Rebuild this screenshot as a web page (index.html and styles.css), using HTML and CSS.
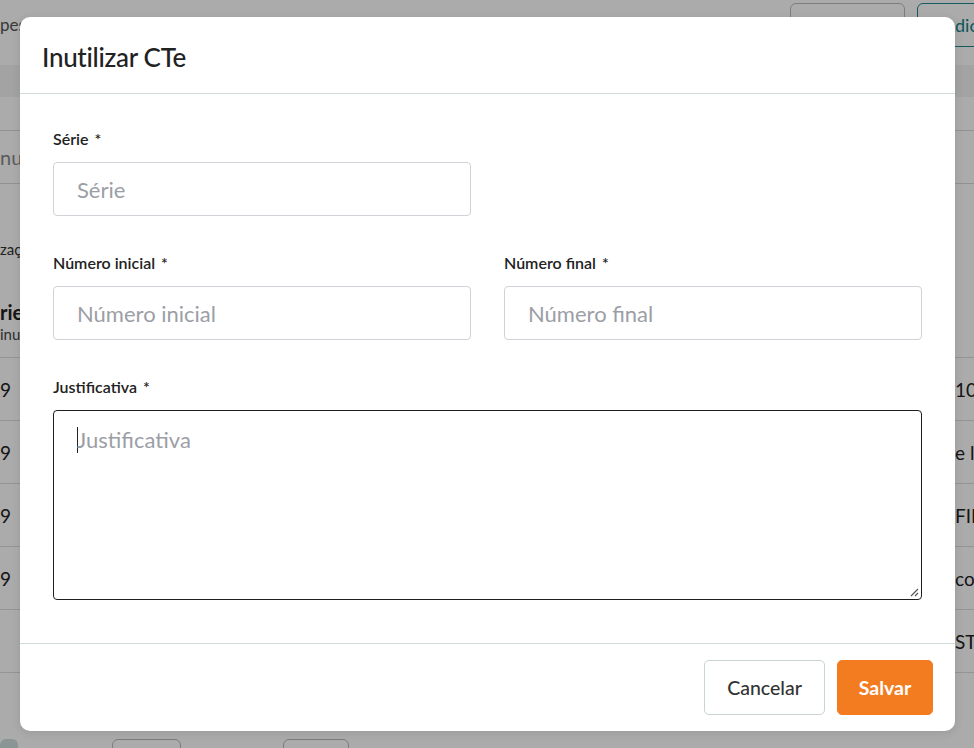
FILE: index.html
```html
<!DOCTYPE html>
<html lang="pt-BR">
<head>
<meta charset="utf-8">
<title>Inutilizar CTe</title>
<link rel="stylesheet" href="styles.css">
</head>
<body>
<div class="page">
  <header class="topbar">
    <span class="crumb">pes</span>
    <div class="top-actions">
      <button class="ghost-btn">Filtros</button>
      <button class="add-btn">Adicionar</button>
    </div>
  </header>
  <div class="tabband"></div>
  <div class="search">nu</div>
  <div class="hint">zaç</div>
  <div class="thead">
    <div class="th-main">rie</div>
    <div class="th-sub">inu</div>
  </div>
  <div class="trow"><span>9</span><span class="rcell">100</span></div>
  <div class="trow"><span>9</span><span class="rcell">e liberado</span></div>
  <div class="trow"><span>9</span><span class="rcell">FINALIZADO</span></div>
  <div class="trow"><span>9</span><span class="rcell">concluído</span></div>
  <div class="trow"><span></span><span class="rcell">STATUS</span></div>
  <div class="pager"><span class="pg pg-a"></span><span class="pg pg-b"></span><span class="pg pg-c"></span></div>
</div>

<div class="backdrop"></div>

<div class="modal" role="dialog">
  <div class="modal-head">
    <h2>Inutilizar CTe</h2>
  </div>
  <div class="modal-body">
    <div class="field half">
      <label>Série <span class="req">*</span></label>
      <input type="text" placeholder="Série">
    </div>
    <div class="row">
      <div class="field">
        <label>Número inicial <span class="req">*</span></label>
        <input type="text" placeholder="Número inicial">
      </div>
      <div class="field">
        <label>Número final <span class="req">*</span></label>
        <input type="text" placeholder="Número final">
      </div>
    </div>
    <div class="field">
      <label>Justificativa <span class="req">*</span></label>
      <div class="textarea">
        <span class="caret"></span><span class="ph">Justificativa</span>
        <svg class="grip" width="10" height="10" viewBox="0 0 10 10"><path d="M9 2 L2 9 M9 6 L6 9" stroke="#555" stroke-width="1.2" fill="none"/></svg>
      </div>
    </div>
  </div>
  <div class="modal-foot">
    <button class="btn btn-cancel">Cancelar</button>
    <button class="btn btn-save">Salvar</button>
  </div>
</div>
</body>
</html>
```

FILE: styles.css
```css
* { box-sizing: border-box; }
html, body { margin: 0; padding: 0; }
body {
  width: 974px;
  height: 748px;
  overflow: hidden;
  font-family: Lato, "Open Sans", sans-serif;
  background: #fff;
  color: #333;
  position: relative;
}

/* background page */
.page { display: flex; flex-direction: column; }
.topbar {
  height: 65px;
  display: flex;
  align-items: flex-start;
  justify-content: space-between;
  background: #fff;
}
.crumb { font-size: 17px; color: #555; margin-top: 14px; }
.top-actions { display: flex; gap: 12px; margin-top: 3px; margin-right: -58px; }
.ghost-btn, .add-btn {
  height: 44px;
  border-radius: 6px;
  background: #fff;
  font-family: Lato, sans-serif;
  font-size: 18px;
}
.ghost-btn { width: 115px; border: 1px solid #bbb; color: #fff; }
.add-btn { width: 115px; border: 1px solid #1b8a8f; color: #138489; padding-left: 25px; text-align: left; }
.tabband { height: 32px; background: #f3f3f3; }
.search {
  height: 54px;
  margin-top: 33px;
  border-top: 1px solid #d8d8d8;
  border-bottom: 1px solid #d8d8d8;
  font-size: 20px;
  color: #888;
  line-height: 52px;
}
.hint { height: 80px; padding-top: 56px; font-size: 15px; color: #333; }
.thead { height: 94px; padding-top: 36px; border-bottom: 1px solid #ddd; }
.th-main { font-size: 20px; font-weight: bold; color: #222; line-height: 24px; }
.th-sub { font-size: 15px; color: #444; line-height: 20px; }
.trow {
  height: 63px;
  display: flex;
  align-items: center;
  justify-content: space-between;
  border-bottom: 1px solid #ddd;
  font-size: 19px;
  color: #222;
}
.rcell { width: 19px; overflow: hidden; white-space: nowrap; }
.pager { display: flex; padding-top: 66px; }
.pg { height: 30px; border: 1px solid #bbb; border-radius: 6px; }
.pg-a { width: 18px; background: #cfdede; border: none; margin-left: 0; }
.pg-b { width: 69px; margin-left: 94px; }
.pg-c { width: 66px; margin-left: 102px; }

.backdrop {
  position: absolute;
  inset: 0;
  background: rgba(0, 0, 0, 0.33);
}

/* modal */
.modal {
  position: absolute;
  left: 20px;
  top: 17px;
  width: 935px;
  height: 714px;
  background: #fff;
  border-radius: 10px;
  display: flex;
  flex-direction: column;
  box-shadow: 0 2px 10px rgba(0,0,0,0.1);
}
.modal-head {
  height: 77px;
  flex: none;
  border-bottom: 1px solid #d3dcdc;
  padding: 4px 22px 0;
  display: flex;
  align-items: center;
}
.modal-head h2 {
  margin: 0;
  font-size: 26px;
  font-weight: 500;
  color: #222;
  letter-spacing: -0.3px;
}
.modal-body {
  flex: 1;
  padding: 35px 33px 0 33px;
  display: flex;
  flex-direction: column;
  gap: 37px;
  border-bottom: 1px solid #d3dcdc;
}
.row { display: grid; grid-template-columns: 418px 418px; gap: 33px; }
.field { display: flex; flex-direction: column; gap: 13px; }
.field.half { width: 418px; }
.field label {
  font-size: 16px;
  font-weight: 600;
  color: #222;
  line-height: 20px;
  height: 20px;
}
.req { margin-left: 2px; }
.field input {
  height: 54px;
  border: 1px solid #cfd3d8;
  border-radius: 4px;
  padding: 0 23px;
  font-family: Lato, sans-serif;
  font-size: 22px;
  color: #333;
  outline: none;
}
.field input::placeholder { color: #9c9ea6; }
.textarea {
  position: relative;
  height: 190px;
  border: 1px solid #1e1e1e;
  border-radius: 4px;
  padding: 16px 23px;
  display: flex;
  align-items: flex-start;
  font-size: 22px;
}
.caret { width: 1px; height: 26px; background: #222; margin-right: -1px; }
.ph { color: #9c9ea6; line-height: 26px; }
.grip { position: absolute; right: 2px; bottom: 2px; }
.modal-foot {
  height: 87px;
  flex: none;
  display: flex;
  justify-content: flex-end;
  align-items: center;
  gap: 12px;
  padding: 0 22px 0 0;
}
.btn {
  height: 55px;
  border-radius: 5px;
  font-family: Lato, sans-serif;
  font-size: 19.5px;
  cursor: pointer;
}
.btn-cancel {
  width: 121px;
  background: #fff;
  border: 1px solid #c9d3d3;
  color: #333;
  font-weight: 500;
}
.btn-save {
  width: 96px;
  background: #f47c20;
  border: 1px solid #f47c20;
  color: #fff;
  font-weight: bold;
}
```
